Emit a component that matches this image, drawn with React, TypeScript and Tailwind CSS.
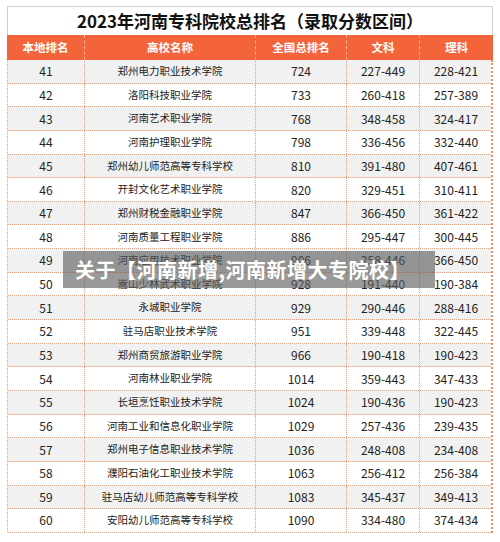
const rows: [string, string, string, string, string][] = [
  ["41", "郑州电力职业技术学院", "724", "227-449", "228-421"],
  ["42", "洛阳科技职业学院", "733", "260-418", "257-389"],
  ["43", "河南艺术职业学院", "768", "348-458", "324-417"],
  ["44", "河南护理职业学院", "798", "336-456", "332-440"],
  ["45", "郑州幼儿师范高等专科学校", "810", "391-480", "407-461"],
  ["46", "开封文化艺术职业学院", "820", "329-451", "310-411"],
  ["47", "郑州财税金融职业学院", "847", "366-450", "361-422"],
  ["48", "河南质量工程职业学院", "886", "295-447", "300-445"],
  ["49", "河南应用技术职业学院", "906", "258-446", "366-450"],
  ["50", "嵩山少林武术职业学院", "928", "191-440", "190-384"],
  ["51", "永城职业学院", "929", "290-446", "288-416"],
  ["52", "驻马店职业技术学院", "951", "339-448", "322-445"],
  ["53", "郑州商贸旅游职业学院", "966", "190-418", "190-423"],
  ["54", "河南林业职业学院", "1014", "359-443", "347-433"],
  ["55", "长垣烹饪职业技术学院", "1024", "190-436", "190-423"],
  ["56", "河南工业和信息化职业学院", "1029", "257-436", "239-435"],
  ["57", "郑州电子信息职业技术学院", "1036", "248-408", "234-408"],
  ["58", "濮阳石油化工职业技术学院", "1063", "256-412", "256-384"],
  ["59", "驻马店幼儿师范高等专科学校", "1083", "345-437", "349-413"],
  ["60", "安阳幼儿师范高等专科学校", "1090", "334-480", "374-434"],
];

const headers = ["本地排名", "高校名称", "全国总排名", "文科", "理科"];

export default function App() {
  return (
    <div className="relative w-[500px] h-[542px] bg-white overflow-hidden font-['Noto_Sans_CJK_SC','Noto_Sans',sans-serif]">
      <div className="ml-[7px] mt-[6px] w-[486px] flex flex-col">
        {/* 标题 */}
        <div className="h-[29px] border border-[#cfcfcf] border-b-0 flex items-center justify-center text-[17px] font-bold text-[#111]">
          2023年河南专科院校总排名（录取分数区间）
        </div>

        {/* 表头 */}
        <div className="grid grid-cols-[78px_171px_91px_73px_73px] h-[25px] bg-[#f4643a] text-white text-[11.5px] font-bold">
          {headers.map((h, i) => (
            <div
              key={h}
              className={`flex items-center justify-center ${
                i < 4 ? "border-r border-dashed border-[#fbb79b]" : ""
              }`}
            >
              {h}
            </div>
          ))}
        </div>

        {/* 数据 */}
        <div className="border-l border-dotted border-[#e2a080] border-r-2 border-r-[#e9906a] border-r-solid">
          {rows.map((r, idx) => (
            <div
              key={r[0]}
              className={`grid grid-cols-[77px_171px_91px_73px_72px] h-[23.65px] border-b border-dotted border-[#e2a080] text-[#222] ${
                idx % 2 === 0 ? "bg-[#f1f1f1]" : "bg-white"
              }`}
            >
              {r.map((c, i) => (
                <div
                  key={i}
                  className={`flex items-center justify-center leading-none ${
                    i === 1 ? "text-[10.5px]" : "text-[12px]"
                  } ${i < 4 ? "border-r border-dotted border-[#e2a080]" : ""}`}
                >
                  {c}
                </div>
              ))}
            </div>
          ))}
        </div>
      </div>

      {/* 覆盖标题条 */}
      <div className="absolute left-[63px] top-[251px] w-[372px] h-[37px] bg-[rgba(90,90,90,0.62)] flex items-center pl-[12px]">
        <span className="text-white text-[20px] font-bold tracking-[0.5px]">
          关于【河南新增,河南新增大专院校】
        </span>
      </div>
    </div>
  );
}
